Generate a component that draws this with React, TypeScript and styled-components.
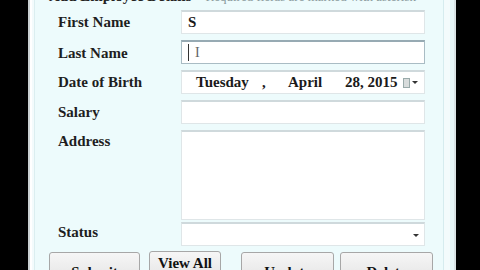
import { createGlobalStyle, styled } from "styled-components"

const Global = createGlobalStyle`
  html, body {
    margin: 0;
    padding: 0;
    background: #000;
    overflow: hidden;
  }
  body {
    font-family: "Liberation Serif", "DejaVu Serif", serif;
  }
`

const Screen = styled.div`
  width: 480px;
  height: 270px;
  display: grid;
  grid-template-columns: 28px 1fr 28px;
  overflow: hidden;
  background: #000;
`

const Frame = styled.div`
  display: flex;
  background: #f3fbfc;
  border-left: 2px solid #c9cfd1;
  border-right: 2px solid #d9e3e5;
  padding: 0 10px 0 4px;
  box-shadow: inset 2px 0 0 #ffffff, inset -4px 0 0 #e7f6f8;
`

const Panel = styled.div`
  flex: 1;
  background: #edfbfc;
  border-left: 1px solid #dbeef0;
  border-right: 1px solid #d6ecef;
  padding-left: 23px;
  padding-right: 10px;
  display: flex;
  flex-direction: column;
`

const Title = styled.div`
  margin-top: -12px;
  margin-left: -9px;
  height: 17px;
  margin-bottom: 5px;
  display: flex;
  gap: 14px;
  font-size: 15px;
  line-height: 17px;
  white-space: nowrap;
`

const TitleMain = styled.span`
  font-weight: bold;
  color: #222;
`

const TitleNote = styled.span`
  color: #8a9a9c;
  font-size: 13px;
`

const Form = styled.div`
  display: grid;
  grid-template-columns: 123px 244px;
  row-gap: 6px;
  align-items: center;
`

const Label = styled.div<{ $top?: boolean; $shift?: number }>`
  font-weight: bold;
  font-size: 15px;
  color: #1e1e1e;
  align-self: ${(p) => (p.$top ? "start" : "center")};
  padding-top: ${(p) => (p.$top ? "3px" : "0")};
  margin-top: ${(p) => (p.$shift ? `${p.$shift}px` : "0")};
`

const Field = styled.div<{ $focus?: boolean; $tall?: boolean }>`
  height: ${(p) => (p.$tall ? "90px" : "24px")};
  box-sizing: border-box;
  background: #fff;
  border: 1px solid ${(p) => (p.$focus ? "#a9bcc4" : "#dfe6e8")};
  border-top: 2px solid ${(p) => (p.$focus ? "#97aab3" : "#cfd9dc")};
  display: flex;
  align-items: center;
  padding: 0 6px;
  font-size: 15px;
  font-weight: bold;
  color: #1a1a1a;
  position: relative;
  white-space: nowrap;
`

const Caret = styled.span`
  width: 1px;
  height: 17px;
  background: #333;
`

const IBeam = styled.span`
  position: absolute;
  left: 13px;
  top: 3px;
  font-weight: normal;
  color: #666;
  font-size: 14px;
`

const DateText = styled.div`
  flex: 1;
  display: flex;
  align-items: center;
  padding-left: 8px;
`

const DatePart = styled.span<{ $w: number }>`
  width: ${(p) => p.$w}px;
  flex-shrink: 0;
`

const CalIcon = styled.span`
  width: 8px;
  height: 8px;
  border: 1px solid #9aa;
  background: #d8dcdc;
  margin-right: 2px;
`

const Arrow = styled.span`
  width: 0;
  height: 0;
  border-left: 3px solid transparent;
  border-right: 3px solid transparent;
  border-top: 3px solid #333;
`

const SelectField = styled(Field)`
  justify-content: flex-end;
  padding-right: 5px;
  align-items: flex-end;
  padding-bottom: 8px;
  margin-top: -4px;
`

const Buttons = styled.div`
  display: flex;
  margin-top: 6px;
  margin-left: -9px;
  align-items: flex-start;
`

const Button = styled.div<{ $w: number; $gap?: number; $raise?: boolean }>`
  width: ${(p) => p.$w}px;
  flex-shrink: 0;
  height: 30px;
  box-sizing: border-box;
  margin-left: ${(p) => p.$gap ?? 0}px;
  margin-top: ${(p) => (p.$raise ? "-1px" : "0")};
  border: 1px solid #a7a7a7;
  border-radius: 3px;
  background: linear-gradient(#f6f6f6, #e4e4e4);
  display: flex;
  justify-content: center;
  padding-top: ${(p) => (p.$raise ? "3px" : "11px")};
  font-weight: bold;
  font-size: 15px;
  color: #111;
`

export default function App() {
  return (
    <>
      <Global />
      <Screen>
        <div />
        <Frame>
          <Panel>
            <Title>
              <TitleMain>Add Employee Details</TitleMain>
              <TitleNote>Required fields are marked with asterisk</TitleNote>
            </Title>
            <Form>
              <Label>First Name</Label>
              <Field>S</Field>
              <Label $shift={3}>Last Name</Label>
              <Field $focus>
                <Caret />
                <IBeam>I</IBeam>
              </Field>
              <Label>Date of Birth</Label>
              <Field>
                <DateText>
                  <DatePart $w={66}>Tuesday</DatePart>
                  <DatePart $w={26}>,</DatePart>
                  <DatePart $w={57}>April</DatePart>
                  <DatePart $w={58}>28, 2015</DatePart>
                </DateText>
                <CalIcon />
                <Arrow />
              </Field>
              <Label>Salary</Label>
              <Field />
              <Label $top>Address</Label>
              <Field $tall />
              <Label $shift={-8}>Status</Label>
              <SelectField>
                <Arrow />
              </SelectField>
            </Form>
            <Buttons>
              <Button $w={91}>Submit</Button>
              <Button $w={72} $gap={9} $raise>View All</Button>
              <Button $w={93} $gap={20}>Update</Button>
              <Button $w={93} $gap={6}>Delete</Button>
            </Buttons>
          </Panel>
        </Frame>
        <div />
      </Screen>
    </>
  )
}
